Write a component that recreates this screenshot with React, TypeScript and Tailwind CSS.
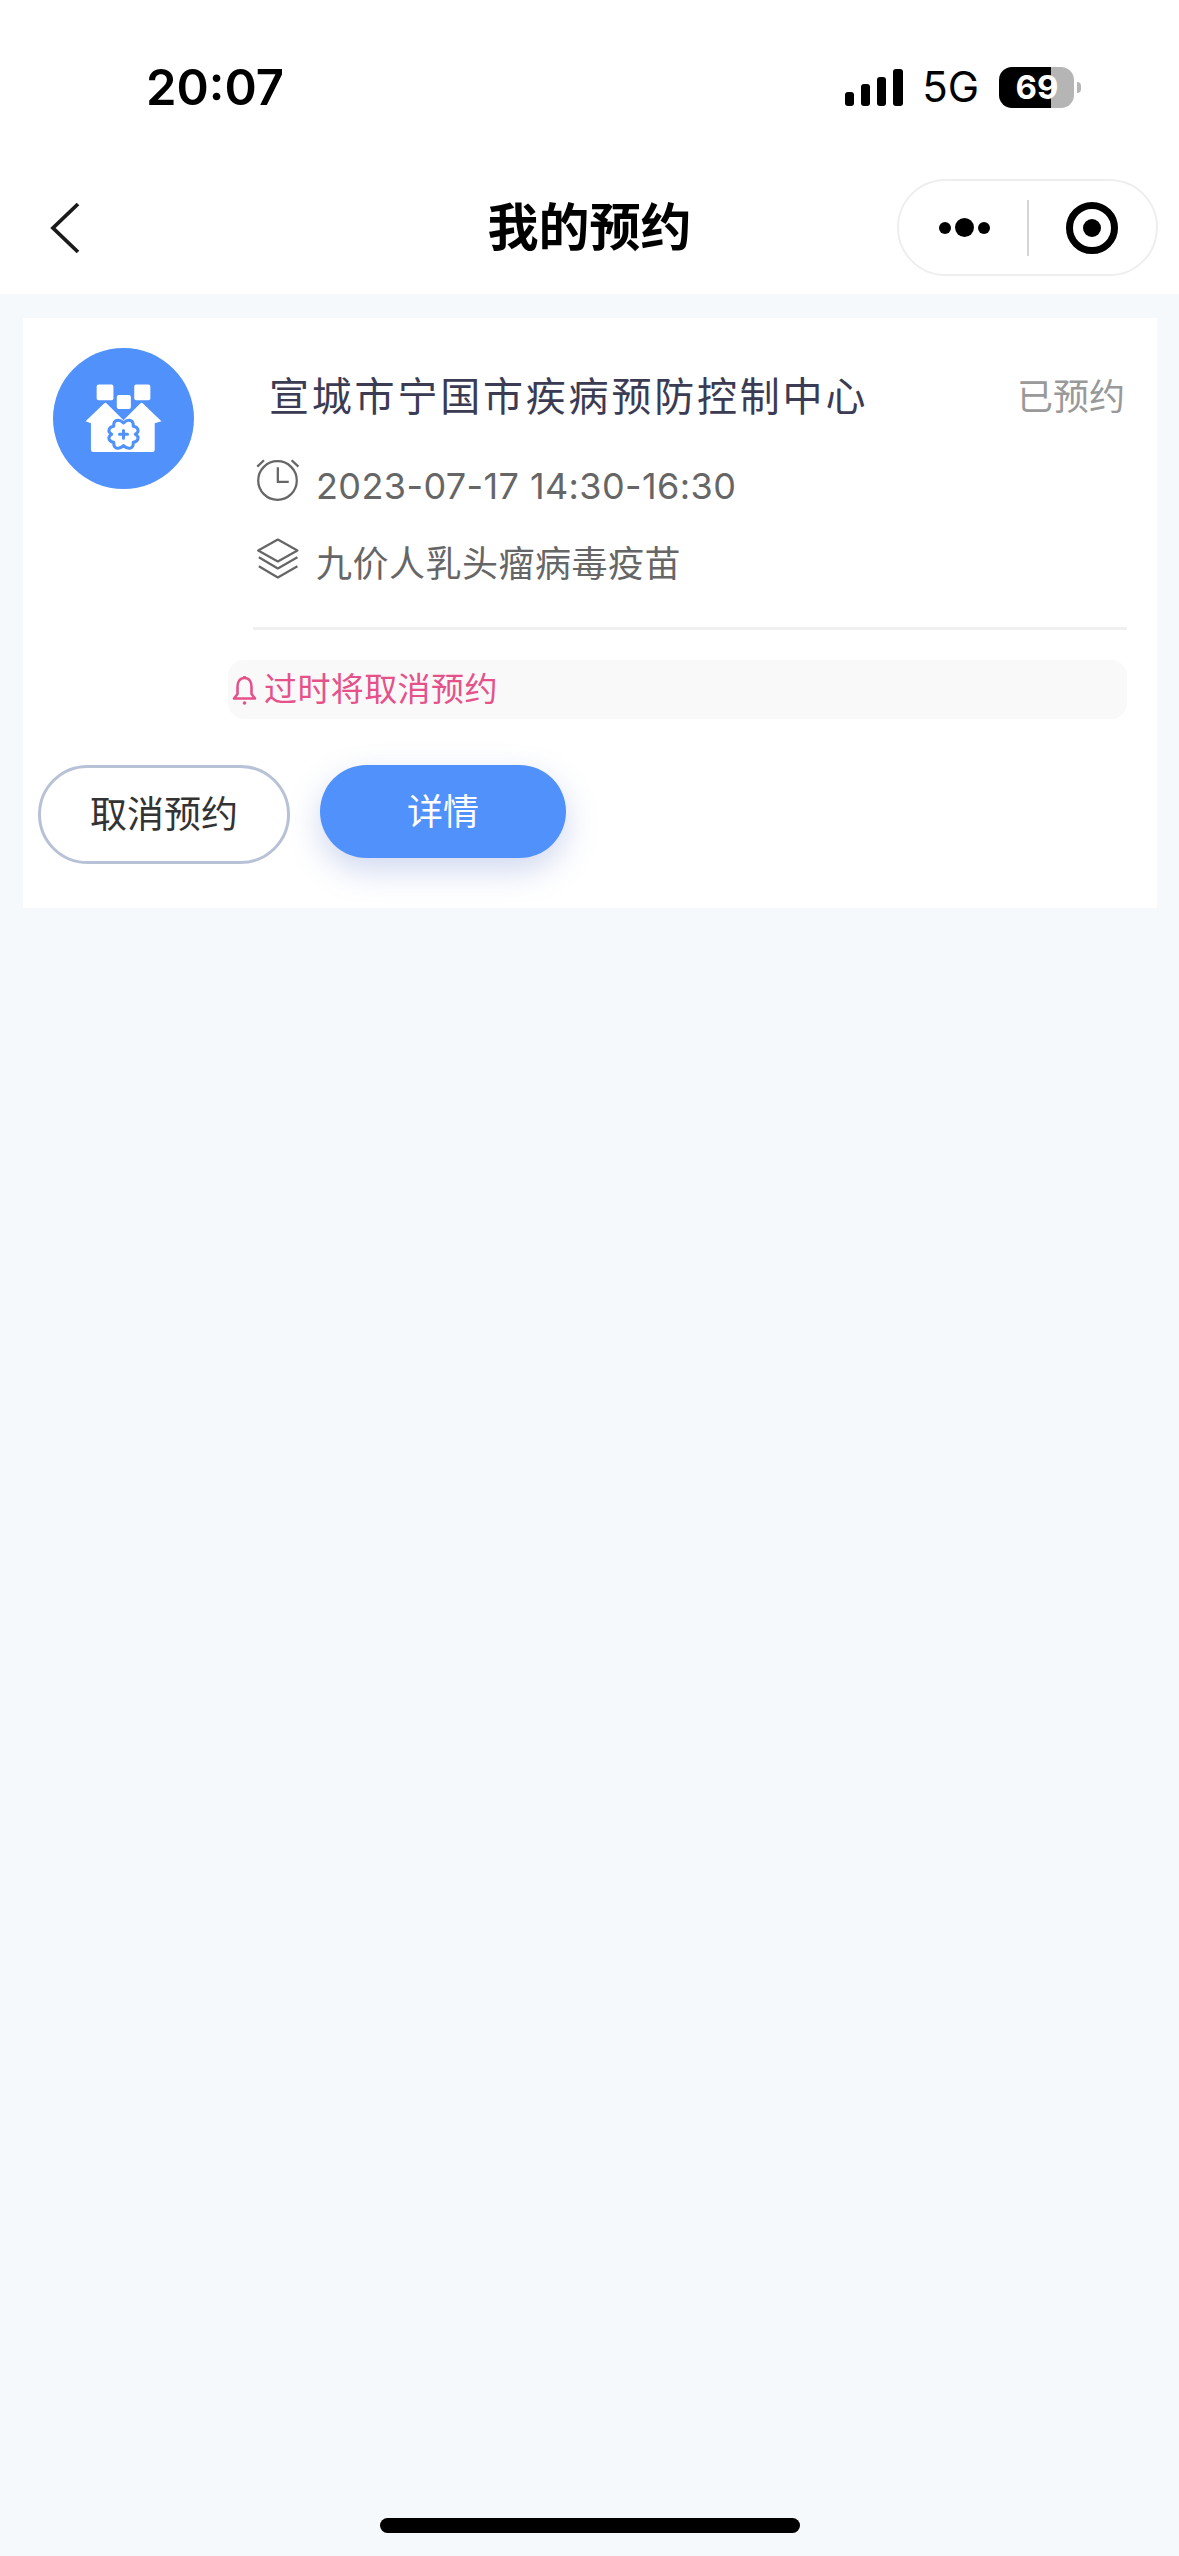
const FONT = "font-['Inter','Noto_Sans_CJK_SC',sans-serif]";

function HospitalLogo() {
  return (
    <svg viewBox="100 85 420 420" className="w-[141px] h-[141px] shrink-0">
      <circle cx="310" cy="295" r="210" fill="#5191fb" />
      <rect x="230" y="194" width="50" height="47" rx="6" fill="#fff" />
      <rect x="342" y="194" width="48" height="47" rx="6" fill="#fff" />
      <rect x="290" y="225" width="42" height="42" rx="6" fill="#fff" />
      <path
        d="M197 303 L252 250 Q256 246 260 250 L310 300 L360 250 Q364 246 368 250 L423 303 L403 309 L403 388 Q403 395 396 395 L220 395 Q213 395 213 388 L213 309 Z"
        fill="#fff"
      />
      <path
        d="M310 308 Q320 298 331 301 Q340 304 339 318 Q350 319 353 328 Q356 336 345 342 Q356 348 353 356 Q350 365 339 366 Q340 380 331 383 Q320 386 310 376 Q300 386 289 383 Q280 380 281 366 Q270 365 267 356 Q264 348 275 342 Q264 336 267 328 Q270 319 281 318 Q280 304 289 301 Q300 298 310 308 Z"
        fill="#fff"
        stroke="#5191fb"
        strokeWidth="9"
        strokeLinejoin="round"
      />
      <path d="M310 331 V354 M298 342 H322" stroke="#5191fb" strokeWidth="9" strokeLinecap="round" />
    </svg>
  );
}

function ClockIcon() {
  return (
    <svg viewBox="100 350 140 135" className="w-[45px] h-[44px] -mt-[12px]" fill="none" stroke="#666" strokeWidth="7">
      <circle cx="170" cy="419" r="60" />
      <path d="M171 378 V423 H205" />
      <path d="M107 376 L128 356 M235 376 L214 356" />
    </svg>
  );
}

function LayersIcon() {
  return (
    <svg viewBox="100 588 140 132" className="w-[45px] h-[43px] -mt-[12px]" fill="none" stroke="#666" strokeWidth="7" strokeLinejoin="round">
      <path d="M171 595 L232 629 L171 663 L110 629 Z" />
      <path d="M112 650 L171 685 L232 650" />
      <path d="M112 678 L171 713 L232 678" />
    </svg>
  );
}

function BellIcon() {
  return (
    <svg viewBox="0 0 24 30" className="w-[25px] h-[30px] shrink-0" fill="none" stroke="#e5528a" strokeWidth="2.6" strokeLinejoin="round">
      <path d="M12 3 C7 3 5 7 5 12 V19 L1.5 23.5 H22.5 L19 19 V12 C19 7 17 3 12 3 Z" />
      <path d="M12 1 V3" />
      <circle cx="12" cy="28" r="1.8" fill="#e5528a" stroke="none" />
    </svg>
  );
}

export default function App() {
  return (
    <div className={`relative min-h-[2556px] bg-[#f5f9fc] ${FONT}`}>
      {/* Status bar + nav */}
      <div className="h-[294px] bg-white">
        <div className="h-[179px] flex items-start justify-between pl-[146px] pr-[98px] pt-[61px]">
          <span className="text-[49px] leading-[54px] font-semibold text-black">20:07</span>
          <div className="flex items-start pt-[8px]">
            <div className="flex items-end gap-[7px] h-[37px]">
              <div className="w-[9px] h-[14px] rounded-[3px] bg-black" />
              <div className="w-[9px] h-[22px] rounded-[3px] bg-black" />
              <div className="w-[9px] h-[29px] rounded-[3px] bg-black" />
              <div className="w-[10px] h-[37px] rounded-[3px] bg-black" />
            </div>
            <span className="ml-[19px] -mt-[7px] text-[42px] leading-[50px] text-black">5G</span>
            <div className="ml-[20px] -mt-[2px] w-[75px] h-[41px] rounded-[13px] bg-[linear-gradient(90deg,#000_69%,#b5b5b5_69%)] flex items-center justify-center pl-[1px] text-[33px] font-bold text-white">
              69
            </div>
            <div className="ml-[3px] mt-[13px] w-[4px] h-[11px] rounded-r-full bg-[#b5b5b5]" />
          </div>
        </div>

        <div className="relative h-[97px] flex items-center justify-between pl-[50px] pr-[21px]">
          <svg viewBox="0 0 30 52" className="w-[30px] h-[52px]" fill="none" stroke="#1a1a1a" strokeWidth="3.8">
            <path d="M28 2 L3 26 L28 50" />
          </svg>
          <div className="absolute inset-x-0 top-0 h-[97px] pt-[2px] flex items-center justify-center text-[51px] font-bold text-black">
            我的预约
          </div>
          <div className="relative w-[261px] h-[97px] rounded-full border-2 border-[#eeeeee] flex items-center bg-white">
            <div className="w-[128px] flex items-center justify-center gap-[4px] pl-[3px]">
              <div className="w-[12px] h-[12px] rounded-full bg-black" />
              <div className="w-[19px] h-[19px] rounded-full bg-black" />
              <div className="w-[12px] h-[12px] rounded-full bg-black" />
            </div>
            <div className="w-[2px] h-[56px] bg-[#d4d4d4]" />
            <div className="flex-1 flex items-center justify-center pr-[2px]">
              <div className="w-[52px] h-[52px] rounded-full border-[7px] border-black flex items-center justify-center">
                <div className="w-[18px] h-[18px] rounded-full bg-black" />
              </div>
            </div>
          </div>
        </div>
      </div>

      {/* Appointment card */}
      <div className="mx-[23px] mt-[24px] h-[590px] w-[1134px] bg-white">
        <div className="flex pt-[30px] pl-[30px] pr-[30px]">
          <HospitalLogo />
          <div className="ml-[59px] flex-1">
            <div className="flex items-center justify-between h-[96px] pt-[1px]">
              <span className="pl-[16px] text-[40px] tracking-[2.8px] text-[#3b3b54]">宣城市宁国市疾病预防控制中心</span>
              <span className="pr-[2px] text-[36px] text-[#999999]">已预约</span>
            </div>
            <div className="flex items-center h-[64px] mt-[10px] gap-[16px] pl-[2px]">
              <ClockIcon />
              <span className="text-[36px] text-[#666666] tracking-[0.4px]">2023-07-17 14:30-16:30</span>
            </div>
            <div className="flex items-center h-[64px] mt-[14px] gap-[16px] pl-[2px]">
              <LayersIcon />
              <span className="text-[36px] tracking-[0.5px] text-[#666666]">九价人乳头瘤病毒疫苗</span>
            </div>
            <div className="mt-[31px] h-[3px] bg-[#f0f0f0]" />
          </div>
        </div>

        <div className="ml-[205px] mr-[30px] mt-[30px] h-[59px] rounded-[16px] bg-[#f9f9f9] flex items-center pl-[4px] gap-[7px]">
          <BellIcon />
          <span className="text-[33px] tracking-[0.4px] text-[#e5528a]">过时将取消预约</span>
        </div>

        <div className="flex items-start mt-[46px] ml-[15px] gap-[30px]">
          <button className="w-[252px] h-[99px] rounded-full border-[3px] border-[#b8c2d6] bg-white text-[37px] text-[#333333]">
            取消预约
          </button>
          <button className="w-[246px] h-[93px] rounded-full bg-[#5191fb] text-[36px] text-white shadow-[0_12px_32px_rgba(81,115,200,0.28)]">
            详情
          </button>
        </div>
      </div>

      {/* Home indicator */}
      <div className="absolute left-[380px] top-[2518px] w-[420px] h-[15px] rounded-full bg-black" />
    </div>
  );
}
